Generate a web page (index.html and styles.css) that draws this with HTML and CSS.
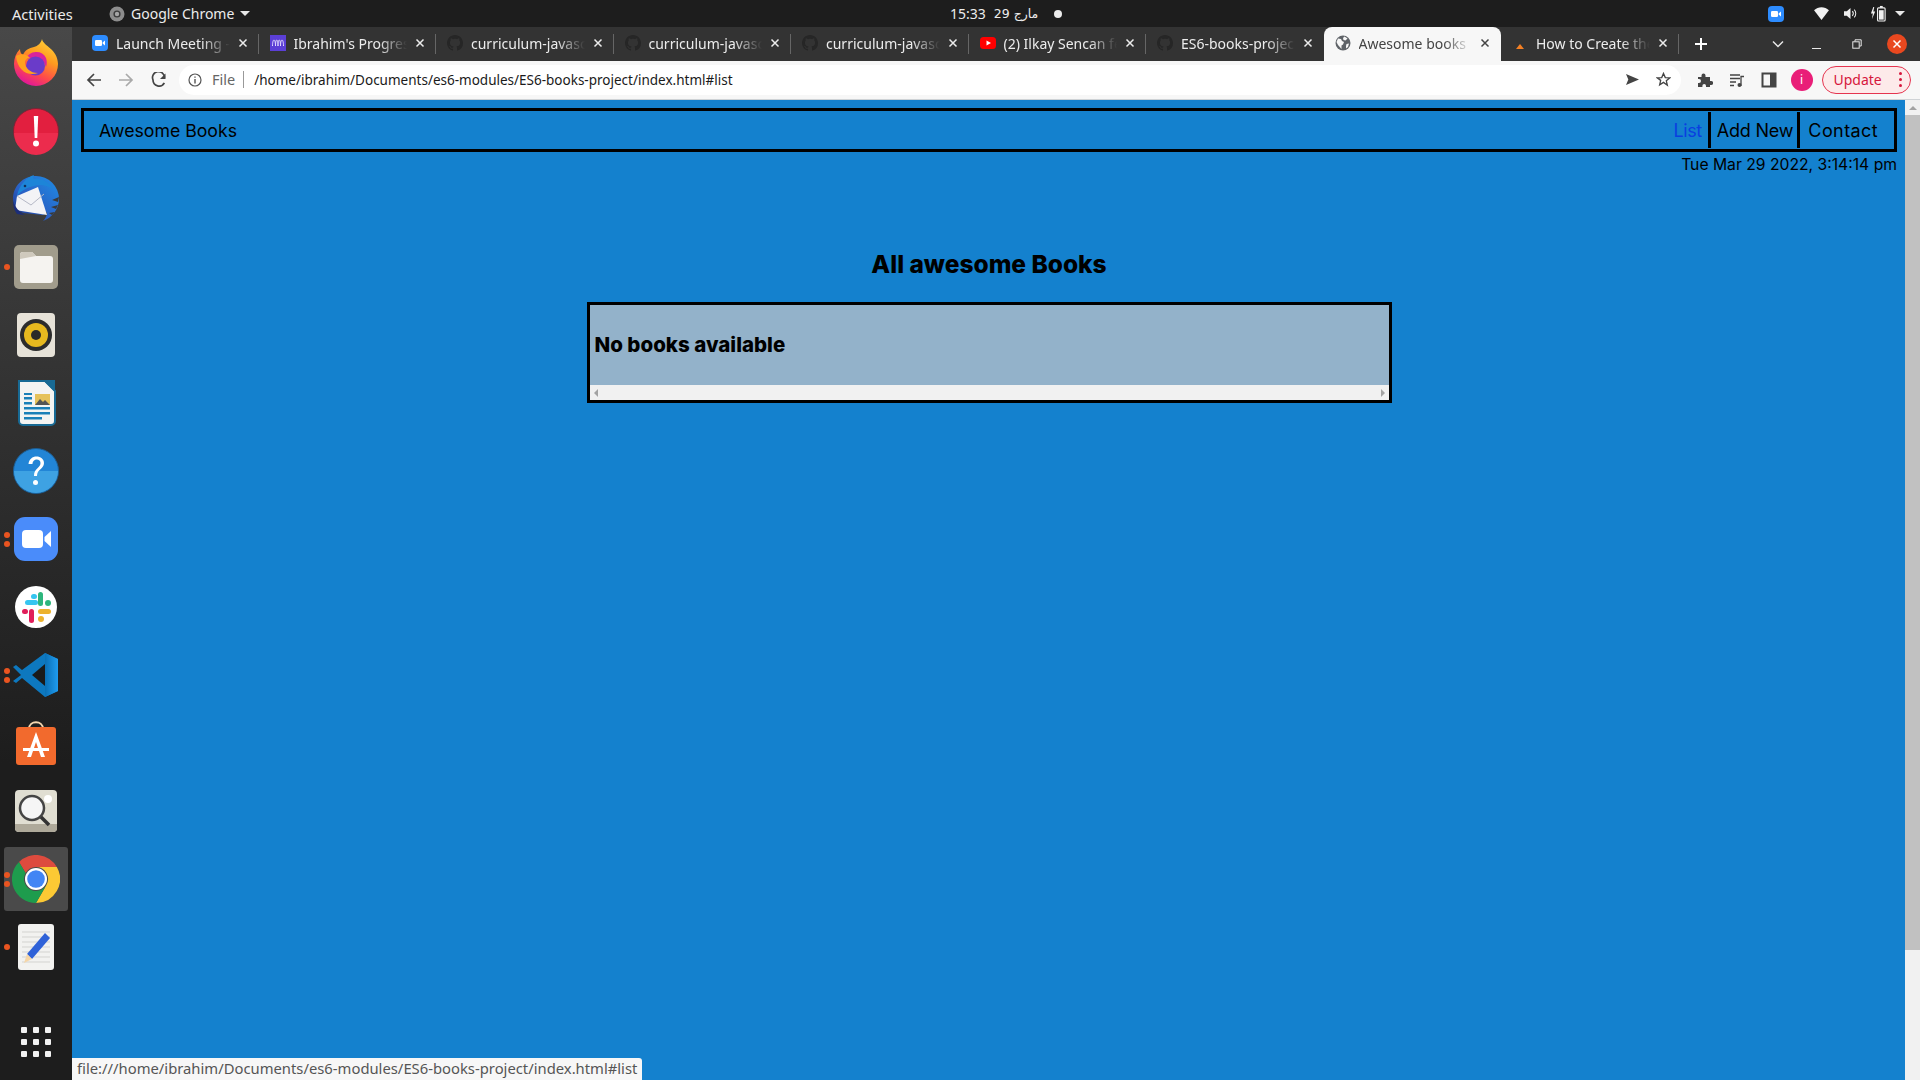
FILE: index.html
```html
<!DOCTYPE html>
<html lang="en">
<head>
    <meta charset="UTF-8">
    <meta name="viewport" content="width=device-width, initial-scale=1.0">
    <title>Awesome books</title>
    <link rel="stylesheet" href="styles.css">
</head>
<body>
    <svg class="defs" width="0" height="0">
        <defs>
            <symbol id="gh" viewBox="0 0 16 16">
                <path d="M8 0C3.58 0 0 3.58 0 8c0 3.54 2.29 6.53 5.47 7.59.4.07.55-.17.55-.38 0-.19-.01-.82-.01-1.49-2.01.37-2.53-.49-2.69-.94-.09-.23-.48-.94-.82-1.13-.28-.15-.68-.52-.01-.53.63-.01 1.08.58 1.23.82.72 1.21 1.87.87 2.33.66.07-.52.28-.87.51-1.07-1.78-.2-3.64-.89-3.64-3.95 0-.87.31-1.59.82-2.15-.08-.2-.36-1.02.08-2.12 0 0 .67-.21 2.2.82.64-.18 1.32-.27 2-.27.68 0 1.36.09 2 .27 1.53-1.04 2.2-.82 2.2-.82.44 1.1.16 1.92.08 2.12.51.56.82 1.27.82 2.15 0 3.07-1.87 3.75-3.65 3.95.29.25.54.73.54 1.48 0 1.07-.01 1.93-.01 2.2 0 .21.15.46.55.38A8.013 8.013 0 0016 8c0-4.42-3.58-8-8-8z"/>
            </symbol>
            <symbol id="tabx" viewBox="0 0 10 10">
                <path d="M1.5 1.5l7 7M8.5 1.5l-7 7" fill="none" stroke="currentColor" stroke-width="1.5"/>
            </symbol>
            <linearGradient id="ffbody" x1=".85" y1="0" x2=".35" y2="1">
                <stop offset="0" stop-color="#ffd83a"/>
                <stop offset=".4" stop-color="#ff9a1f"/>
                <stop offset=".72" stop-color="#ff4a4a"/>
                <stop offset="1" stop-color="#e0169a"/>
            </linearGradient>
            <linearGradient id="tbird" x1="1" y1="0" x2="0" y2="1">
                <stop offset="0" stop-color="#1f8fe6"/>
                <stop offset=".6" stop-color="#2a5fc4"/>
                <stop offset="1" stop-color="#1b2d7a"/>
            </linearGradient>
            <linearGradient id="vsc" x1="0" y1="0" x2="1" y2="0">
                <stop offset="0" stop-color="#0a6fb5"/>
                <stop offset="1" stop-color="#1f9cf0"/>
            </linearGradient>
        </defs>
    </svg>

    <header class="topbar">
        <span class="activities">Activities</span>
        <span class="app-menu">
            <svg class="app-icon" viewBox="0 0 16 16"><circle cx="8" cy="8" r="7.5" fill="#8d8d8d"/><circle cx="8" cy="8" r="3.6" fill="#3a3a3a"/><circle cx="8" cy="8" r="2.2" fill="#a5a5a5"/></svg>
            Google Chrome
            <i class="caret"></i>
        </span>
        <span class="clock">15:33 <span class="clock-date" dir="rtl">مارج 29</span><i class="clock-dot"></i></span>
        <span class="tray">
            <svg class="tray-zoom" viewBox="0 0 16 16"><rect width="16" height="16" rx="4" fill="#2d8cff"/><rect x="3" y="5" width="7" height="6" rx="1.3" fill="#fff"/><path d="M10.6 7.4L13 5.6v4.8l-2.4-1.8z" fill="#fff"/></svg>
            <svg class="tray-wifi" viewBox="0 0 16 14"><path d="M0 3.5C4.500-.9 11.500-.9 16 3.500L8 14z" fill="#f2f2f2"/></svg>
            <svg class="tray-sound" viewBox="0 0 16 14"><path d="M1 4.500h3L8 1v12L4 9.500H1z" fill="#ededed"/><path d="M10 4.500c1.200 1.400 1.200 3.600 0 5M12 2.800c2.200 2.300 2.200 6.100 0 8.400" fill="none" stroke="#ededed" stroke-width="1.100"/></svg>
            <svg class="tray-battery" viewBox="0 0 18 18"><path d="M3.500 2L1 9h2l-1 6 3.500-8h-2l1-5z" fill="#f0f0f0"/><rect x="8" y="3" width="8" height="14" rx="1" fill="none" stroke="#f0f0f0" stroke-width="1.200"/><rect x="10.500" y="1" width="3" height="2" fill="#f0f0f0"/><rect x="9.500" y="5.500" width="5" height="10" fill="#f0f0f0"/></svg>
            <i class="caret"></i>
        </span>
    </header>

    <div class="desktop">
        <nav class="dock">
            <div class="dock-item">
                <svg viewBox="0 0 48 48"><path d="M30 0C31 7 46 10 46 25A22 22 0 012 25C2 19 4 14 8 10C8 13 9 15 11 16C13 11 17 9 22 8C26 7 29 4 30 0z" fill="url(#ffbody)"/><path d="M14 20a11 11 0 0120-1c1 3 1 6 0 9-2-6-6-9-11-9-3 0-6 0-9 1z" fill="#d9249c"/><circle cx="23.500" cy="27" r="9.500" fill="#6a3bc9"/><path d="M4 17c5-3 11-2 14 2-3 0-5 2-5 4 0 6 5 11 13 11-10 4-21-3-22-17z" fill="#ffa11f"/></svg>
            </div>
            <div class="dock-item">
                <svg viewBox="0 0 48 48"><circle cx="24" cy="24" r="22.500" fill="#e21f3f" stroke="#7c2436"/><path d="M2 26h44a22 22 0 01-44 0z" fill="#ec2c4d"/><path d="M21.800 9h4.400l-.9 22h-2.600z" fill="#fff"/><circle cx="24" cy="36.500" r="3" fill="#fff"/></svg>
            </div>
            <div class="dock-item">
                <svg viewBox="0 0 48 48"><path d="M24 1a23 23 0 0123 23c0 10-7 19-16 22 3-3 4-6 4-9l-4 3-20-2C5 36 1 30 1 24 1 11 11 1 24 1z" fill="url(#tbird)"/><path d="M5 21C7 10 15 2 22 0c-1 2-1 3 0 4 7-1 15 3 19 10-7-4-13-5-19-3C16 12 10 15 5 21z" fill="#1d85d8"/><circle cx="13" cy="11" r="1.300" fill="#12305f"/><path d="M5 21l21-9 9 28-32-5z" fill="#f3f3f6"/><path d="M5 21l14 9 13-11" fill="none" stroke="#b5b8c6"/><path d="M1 26c2 6 6 11 12 14l-8-1c-3-4-4-8-4-13z" fill="#1b2d7a"/><path d="M47 22l-7 3 6 2zM46 30l-7 2 5 2zM43 37l-6 1 3 2z" fill="#3a3a3a"/></svg>
            </div>
            <div class="dock-item has-dot">
                <i class="run-dots"><b></b></i>
                <svg viewBox="0 0 48 48"><rect x="2" y="2" width="44" height="44" rx="5" fill="#a19c8c"/><path d="M8 12a3 3 0 013-3h9l4 4h14a3 3 0 013 3v21a3 3 0 01-3 3H11a3 3 0 01-3-3z" fill="#f5f3f0"/><path d="M8 16V12a3 3 0 013-3h9l4 4z" fill="#cfc9bd"/></svg>
            </div>
            <div class="dock-item">
                <svg viewBox="0 0 48 48"><rect x="5" y="2" width="38" height="44" rx="4" fill="#e6e2d8"/><circle cx="24" cy="24" r="16" fill="#2c2c2c"/><circle cx="24" cy="24" r="12" fill="#e7b91f"/><circle cx="24" cy="24" r="5" fill="#2b2a28"/></svg>
            </div>
            <div class="dock-item">
                <svg viewBox="0 0 48 48"><path d="M7 2h26l10 10v30a4 4 0 01-4 4H11a4 4 0 01-4-4z" fill="#f4f4f2" stroke="#186a94" stroke-width="2"/><path d="M31 1l12 12V1z" fill="#186a94"/><path d="M12 18h8v2.500h-8zM12 23h8v2.500h-8zM12 28h26v2.500H12zM12 33h26v2.500H12zM12 38h18v2.500H12z" fill="#1b80b8"/><path d="M12 14h8v2h-8z" fill="#1b80b8"/><rect x="23" y="15" width="15" height="11" fill="#e6c25a"/><path d="M23 26l5-6 3 3 2-2 5 5z" fill="#555"/></svg>
            </div>
            <div class="dock-item">
                <svg viewBox="0 0 48 48"><circle cx="24" cy="24" r="22.500" fill="#2285d6" stroke="#1d5d92"/><path d="M2 24h44a22 22 0 01-44 0z" fill="#3ea2e3"/><path d="M16.500 17c.5-5 4-7.500 8-7.500s7.500 2.600 7.500 6.500c0 6-7 6-7 13h-3c0-8 6.500-8 6.500-13 0-2-1.600-3.500-3.800-3.500-2.300 0-4 1.500-4.300 4.500z" fill="#fff"/><circle cx="23.500" cy="35.500" r="2.500" fill="#fff"/></svg>
            </div>
            <div class="dock-item has-dot">
                <i class="run-dots"><b></b><b></b></i>
                <svg viewBox="0 0 48 48"><rect x="2" y="2" width="44" height="44" rx="11" fill="#4a8cfa"/><rect x="10" y="15" width="21" height="18" rx="4" fill="#fff"/><path d="M32.500 22l6.500-6v16l-6.500-6z" fill="#fff"/></svg>
            </div>
            <div class="dock-item">
                <svg viewBox="0 0 48 48"><circle cx="24" cy="24" r="21" fill="#fff"/><rect x="26" y="9" width="5" height="14" rx="2.500" fill="#2eb67d"/><rect x="13" y="17" width="13" height="5" rx="2.500" fill="#36c5f0"/><rect x="19" y="11" width="6" height="5" rx="2.500" fill="#36c5f0"/><circle cx="36" cy="20" r="3" fill="#2eb67d"/><rect x="10" y="26" width="6" height="5" rx="2.500" fill="#e01e5a"/><rect x="17" y="26" width="5" height="14" rx="2.500" fill="#e01e5a"/><rect x="26" y="26" width="13" height="5" rx="2.500" fill="#ecb22e"/><rect x="26" y="33" width="6" height="6" rx="3" fill="#ecb22e"/></svg>
            </div>
            <div class="dock-item has-dot">
                <i class="run-dots"><b></b><b></b></i>
                <svg viewBox="0 0 48 48"><path d="M33 2l13 6v32l-13 6L10 27l-6 5-3-2 8-6-8-8 3-2 6 5z" fill="#0d78bf"/><path d="M33 2l13 6v32l-13 6z" fill="url(#vsc)"/><path d="M33 13L20 24l13 11z" fill="#1a1a1a"/></svg>
            </div>
            <div class="dock-item">
                <svg viewBox="0 0 48 48"><path d="M17 10c0-9 14-9 14 0" fill="none" stroke="#f5d7b0" stroke-width="2"/><rect x="4" y="8" width="40" height="38" rx="3" fill="#f26a2d"/><path d="M24 13l-9 25h4l5-15 5 15h4z" fill="#fff"/><rect x="11" y="29" width="26" height="3" fill="#fff"/></svg>
            </div>
            <div class="dock-item">
                <svg viewBox="0 0 48 48"><rect x="3" y="3" width="42" height="42" rx="4" fill="#e0ded2"/><path d="M3 37h42v4a4 4 0 01-4 4H7a4 4 0 01-4-4z" fill="#aea99a"/><circle cx="20" cy="21" r="12" fill="#f5f5f5" stroke="#444" stroke-width="2.500"/><path d="M29 30l8 8" stroke="#333" stroke-width="3.500"/><circle cx="36" cy="12" r="4" fill="#fff"/></svg>
            </div>
            <div class="dock-item is-active has-dot">
                <i class="run-dots"><b></b><b></b></i>
                <svg viewBox="0 0 48 48"><path d="M7 7A24 24 0 0144.800 12H24a12 12 0 00-10.400 6z" fill="#dd4b3e"/><path d="M44.800 12A24 24 0 0124 48l10.400-18A12 12 0 0024 12z" fill="#fcc934"/><path d="M24 48A24 24 0 017 7l6.600 11a12 12 0 0020.800 12z" fill="#1e9c4d"/><circle cx="24" cy="24" r="11" fill="#fff"/><circle cx="24" cy="24" r="8.800" fill="#4285f4"/></svg>
            </div>
            <div class="dock-item has-dot">
                <i class="run-dots"><b></b></i>
                <svg viewBox="0 0 48 48"><rect x="6" y="1" width="36" height="46" rx="3" fill="#f2f2f0"/><path d="M10 9h28M10 14h28M10 19h28M10 24h28M10 29h28M10 34h28M10 39h28" stroke="#d3d3d0"/><path d="M33 10l5 5-18 21-5-5z" fill="#2f62d8"/><path d="M15 31l5 5-8 4z" fill="#f5d6a8"/></svg>
            </div>
            <div class="dock-grid">
                <i></i><i></i><i></i><i></i><i></i><i></i><i></i><i></i><i></i>
            </div>
        </nav>

        <div class="browser">
            <div class="tabstrip">
                <div class="tab">
                    <svg class="favicon" viewBox="0 0 16 16"><rect width="16" height="16" rx="4" fill="#2d8cff"/><rect x="3" y="5" width="7" height="6" rx="1.300" fill="#fff"/><path d="M10.600 7.400L13 5.600v4.800l-2.400-1.800z" fill="#fff"/></svg>
                    <span class="tab-title">Launch Meeting - Zoom</span>
                    <svg class="tab-close"><use href="#tabx"/></svg>
                </div>
                <div class="tab">
                    <svg class="favicon" viewBox="0 0 16 16"><rect width="16" height="16" fill="#5b3fd6"/><path d="M2.500 11c0-8 3-8 3 0M5.500 11c0-8 2.500-8 2.500 0M8 11c0-8 2.500-8 2.500 0M10.500 11c0-8 3-8 3 0" fill="none" stroke="#e4dcff" stroke-width="1"/></svg>
                    <span class="tab-title">Ibrahim's Progress</span>
                    <svg class="tab-close"><use href="#tabx"/></svg>
                </div>
                <div class="tab">
                    <svg class="favicon gh-icon"><use href="#gh"/></svg>
                    <span class="tab-title">curriculum-javascript</span>
                    <svg class="tab-close"><use href="#tabx"/></svg>
                </div>
                <div class="tab">
                    <svg class="favicon gh-icon"><use href="#gh"/></svg>
                    <span class="tab-title">curriculum-javascript</span>
                    <svg class="tab-close"><use href="#tabx"/></svg>
                </div>
                <div class="tab">
                    <svg class="favicon gh-icon"><use href="#gh"/></svg>
                    <span class="tab-title">curriculum-javascript</span>
                    <svg class="tab-close"><use href="#tabx"/></svg>
                </div>
                <div class="tab">
                    <svg class="favicon" viewBox="0 0 16 16"><rect y="2" width="16" height="12" rx="3.500" fill="#f00"/><path d="M6.500 5.500L11 8l-4.500 2.500z" fill="#fff"/></svg>
                    <span class="tab-title">(2) Ilkay Sencan feat</span>
                    <svg class="tab-close"><use href="#tabx"/></svg>
                </div>
                <div class="tab tab-before-active">
                    <svg class="favicon gh-icon"><use href="#gh"/></svg>
                    <span class="tab-title">ES6-books-project</span>
                    <svg class="tab-close"><use href="#tabx"/></svg>
                </div>
                <div class="tab tab-active">
                    <svg class="favicon" viewBox="0 0 16 16"><circle cx="8" cy="8" r="7.500" fill="#5f6368"/><path d="M3 3.500l3 .5 1 2 2 1-1 2.500-1.500 1V14L3 10 1.500 7zM9.500 1.500l3 2-2 2-2-.5-.5-2zM11.500 9l2.500-.5-1 3.500-2 1.500V11z" fill="#f7f7f7"/></svg>
                    <span class="tab-title">Awesome books</span>
                    <svg class="tab-close"><use href="#tabx"/></svg>
                </div>
                <div class="tab">
                    <svg class="favicon" viewBox="0 0 16 16"><path d="M4 14l4-5 4 5z" fill="#f48024"/></svg>
                    <span class="tab-title">How to Create the Header</span>
                    <svg class="tab-close"><use href="#tabx"/></svg>
                </div>
                <svg class="new-tab" viewBox="0 0 14 14"><path d="M7 1v12M1 7h12" stroke="#fff" stroke-width="2"/></svg>
                <div class="window-controls">
                    <svg class="tab-search" viewBox="0 0 12 8"><path d="M1 1.500l5 5 5-5" fill="none" stroke="#e8e8e8" stroke-width="1.500"/></svg>
                    <i class="win-min"></i>
                    <svg class="win-restore" viewBox="0 0 10 10"><path d="M3 2.500V.8h6.200V7H7.500" fill="none" stroke="#e8e8e8"/><rect x=".8" y="2.800" width="6.400" height="6.400" fill="none" stroke="#e8e8e8"/></svg>
                    <svg class="win-close" viewBox="0 0 20 20"><circle cx="10" cy="10" r="10" fill="#e9481f"/><path d="M6.500 6.500l7 7M13.500 6.500l-7 7" stroke="#fff" stroke-width="1.500"/></svg>
                </div>
            </div>

            <div class="toolbar">
                <svg class="tool-btn" viewBox="0 0 16 16"><path d="M15 8H2.500M8 2L2 8l6 6" fill="none" stroke="#444" stroke-width="1.700"/></svg>
                <svg class="tool-btn" viewBox="0 0 16 16"><path d="M1 8h12.500M8 2l6 6-6 6" fill="none" stroke="#a9a9a9" stroke-width="1.700"/></svg>
                <svg class="tool-btn" viewBox="0 0 16 16"><path d="M13.500 5.500A6 6 0 102 8a6 6 0 0011.300 2.800" fill="none" stroke="#444" stroke-width="1.700"/><path d="M14.500 1.500v5.500H9z" fill="#444"/></svg>
                <div class="omnibox">
                    <svg class="info-icon" viewBox="0 0 14 14"><circle cx="7" cy="7" r="6" fill="none" stroke="#555" stroke-width="1.200"/><path d="M7 6v4.500M7 3.500v1.300" stroke="#555" stroke-width="1.400"/></svg>
                    <span class="scheme">File</span>
                    <span class="url">/home/ibrahim/Documents/es6-modules/ES6-books-project/index.html#list</span>
                    <svg class="omni-send" viewBox="0 0 16 14"><path d="M1 1l14 6-14 6 2.500-6z" fill="#444"/></svg>
                    <svg class="omni-star" viewBox="0 0 16 16"><path d="M8 1.500l1.900 4.400 4.700.4-3.600 3.100 1.100 4.700L8 11.100l-4.100 2.500L5 8.900 1.400 6.300l4.700-.4z" fill="none" stroke="#444" stroke-width="1.400"/></svg>
                </div>
                <div class="toolbar-actions">
                    <svg class="tool-action" viewBox="0 0 16 16"><path d="M1 5h3.500V3.500a2 2 0 014 0V5H13v4h1.200a2 2 0 010 4H13v2H9v-1.200a1.800 1.800 0 00-3.600 0V15H1v-4h1a2 2 0 000-4H1z" fill="#444"/></svg>
                    <svg class="tool-action" viewBox="0 0 16 16"><path d="M1 3h10M1 6.500h10M1 10h6M1 13.500h4" stroke="#444" stroke-width="1.300"/><path d="M12 14V4.500h3" fill="none" stroke="#444" stroke-width="1.300"/><circle cx="10.500" cy="13" r="2" fill="#444"/></svg>
                    <svg class="tool-action" viewBox="0 0 16 16"><rect x="1.500" y="1.500" width="13" height="13" fill="none" stroke="#444" stroke-width="2"/><rect x="9" y="2" width="5" height="12" fill="#444"/></svg>
                    <span class="avatar">i</span>
                    <span class="update-btn">Update <i class="kebab"><b></b><b></b><b></b></i></span>
                </div>
            </div>

            <div class="viewport">
                <main class="page">
                    <div class="navbar">
                        <span class="brand">Awesome Books</span>
                        <ul class="nav-links">
                            <li class="nav-link nav-link-current">List</li>
                            <li class="nav-link nav-link-add">Add New</li>
                            <li class="nav-link nav-link-contact">Contact</li>
                        </ul>
                    </div>
                    <p class="date">Tue Mar 29 2022, 3:14:14 pm</p>
                    <h2 class="heading">All awesome Books</h2>
                    <section class="book-list">
                        <div class="book-list-body">No books available</div>
                        <div class="h-scroll">
                            <i class="arrow-left"></i>
                            <i class="arrow-right"></i>
                        </div>
                    </section>
                </main>
                <div class="v-scroll">
                    <i class="arrow-up"></i>
                    <div class="v-thumb"></div>
                </div>
                <div class="status-bubble">file:///home/ibrahim/Documents/es6-modules/ES6-books-project/index.html#list</div>
            </div>
        </div>
    </div>
</body>
</html>
```

FILE: styles.css
```css
* {
    box-sizing: border-box;
}
html, body {
    margin: 0;
    height: 100%;
}
body {
    width: 1920px;
    height: 1080px;
    overflow: hidden;
    display: flex;
    flex-direction: column;
    font-family: "Noto Sans", sans-serif;
    background-color: #1d1d1d;
}
.defs {
    position: absolute;
}

/* ubuntu top bar */
.topbar {
    height: 27px;
    flex: none;
    position: relative;
    display: flex;
    align-items: center;
    padding-left: 12px;
    background-color: #1d1d1d;
    color: #ececec;
    font-size: 14px;
}
.activities {
    width: 97px;
    font-size: 14.6px;
}
.app-menu {
    display: flex;
    align-items: center;
    gap: 6px;
}
.app-icon {
    width: 16px;
    height: 16px;
}
.caret {
    display: inline-block;
    width: 0;
    height: 0;
    border-left: 5px solid transparent;
    border-right: 5px solid transparent;
    border-top: 5px solid #e8e8e8;
}
.clock {
    position: absolute;
    left: 950px;
    top: 4px;
    display: flex;
    align-items: center;
    gap: 8px;
    white-space: nowrap;
}
.clock-date {
    font-family: "DejaVu Sans", sans-serif;
    font-size: 12.5px;
}
.clock-dot {
    width: 8px;
    height: 8px;
    margin-left: 8px;
    border-radius: 50%;
    background-color: #ececec;
}
.tray {
    margin-left: auto;
    display: flex;
    align-items: center;
    padding-right: 15px;
}
.tray-zoom {
    width: 16px;
    height: 16px;
}
.tray-wifi {
    width: 15px;
    height: 13px;
    margin-left: 30px;
}
.tray-sound {
    width: 15px;
    height: 13px;
    margin-left: 14px;
}
.tray-battery {
    width: 17px;
    height: 17px;
    margin-left: 12px;
}
.tray .caret {
    margin-left: 8px;
}

.desktop {
    flex: 1;
    display: flex;
    min-height: 0;
}

/* launcher */
.dock {
    width: 72px;
    flex: none;
    display: flex;
    flex-direction: column;
    padding-top: 2px;
    background: linear-gradient(#484848 0, #2f2f2f 40%, #1d1d1d 70%);
}
.dock-item {
    position: relative;
    height: 68px;
    flex: none;
    display: flex;
    align-items: center;
    justify-content: center;
}
.dock-item svg {
    width: 48px;
    height: 48px;
}
.is-active::before {
    content: "";
    position: absolute;
    left: 4px;
    right: 4px;
    top: 2px;
    bottom: 2px;
    border-radius: 3px;
    background-color: #4a4a4a;
}
.is-active svg {
    position: relative;
}
.run-dots {
    position: absolute;
    left: 4px;
    top: 0;
    bottom: 0;
    display: flex;
    flex-direction: column;
    justify-content: center;
    gap: 3px;
    z-index: 1;
}
.run-dots b {
    width: 6px;
    height: 6px;
    border-radius: 50%;
    background-color: #e95420;
}
.dock-grid {
    margin-top: auto;
    margin-bottom: 23px;
    align-self: center;
    display: grid;
    grid-template-columns: repeat(3, 6px);
    grid-template-rows: repeat(3, 6px);
    gap: 6px;
    column-gap: 6px;
}
.dock-grid i {
    border-radius: 1px;
    background-color: #f2f2f2;
}

.browser {
    flex: 1;
    min-width: 0;
    display: flex;
    flex-direction: column;
}

/* tabs */
.tabstrip {
    height: 34px;
    flex: none;
    display: flex;
    align-items: center;
    padding-left: 9px;
    background-color: #333333;
}
.tab {
    position: relative;
    width: 177.5px;
    height: 34px;
    flex: none;
    display: flex;
    align-items: center;
    padding: 0 11px 2px 11px;
    color: #ececec;
    font-size: 14px;
}
.tab::after {
    content: "";
    position: absolute;
    right: 0;
    top: 7px;
    bottom: 7px;
    width: 1px;
    background-color: #666666;
}
.tab-before-active::after, .tab-active::after {
    display: none;
}
.tab-active {
    border-radius: 8px 8px 0 0;
    background-color: #f7f7f7;
    color: #444444;
}
.favicon {
    width: 16px;
    height: 16px;
    flex: none;
}
.gh-icon {
    fill: #262626;
}
.tab-title {
    flex: 1;
    min-width: 0;
    margin-left: 8px;
    white-space: nowrap;
    overflow: hidden;
    -webkit-mask-image: linear-gradient(to right, #000 75%, transparent 100%);
    mask-image: linear-gradient(to right, #000 75%, transparent 100%);
}
.tab-close {
    width: 10px;
    height: 10px;
    flex: none;
    margin-left: 8px;
}
.new-tab {
    width: 14px;
    height: 14px;
    margin-left: 15px;
}
.window-controls {
    margin-left: auto;
    display: flex;
    align-items: center;
    padding-right: 13px;
}
.tab-search {
    width: 12px;
    height: 8px;
}
.win-min {
    width: 9px;
    height: 1px;
    margin: 8px 0 0 28px;
    background-color: #e8e8e8;
}
.win-restore {
    width: 10px;
    height: 10px;
    margin-left: 31px;
}
.win-close {
    width: 20px;
    height: 20px;
    margin-left: 25px;
}

/* toolbar */
.toolbar {
    height: 39px;
    flex: none;
    display: flex;
    align-items: center;
    padding: 0 9px 1px 13.5px;
    border-bottom: 1px solid #cfd3d6;
    background-color: #f7f7f7;
}
.tool-btn {
    width: 16px;
    height: 16px;
    flex: none;
    margin-right: 16.5px;
}
.omnibox {
    width: 1502px;
    height: 30px;
    flex: none;
    display: flex;
    align-items: center;
    margin-left: -4px;
    padding: 0 9px;
    border-radius: 15px;
    background-color: #ffffff;
}
.info-icon {
    width: 14px;
    height: 14px;
    flex: none;
}
.scheme {
    padding: 0 8px 0 10px;
    margin-right: 10px;
    border-right: 1px solid #999999;
    color: #666666;
    font-size: 14.5px;
    line-height: 17px;
}
.url {
    flex: 1;
    color: #1a1a1a;
    font-size: 13.5px;
}
.omni-send {
    width: 15px;
    height: 13px;
    margin-right: 16px;
}
.omni-star {
    width: 15px;
    height: 15px;
    margin-right: 1px;
}
.toolbar-actions {
    display: flex;
    align-items: center;
    margin-left: 15.5px;
}
.tool-action {
    width: 16px;
    height: 16px;
    margin-right: 16px;
}
.avatar {
    width: 22px;
    height: 22px;
    display: flex;
    align-items: center;
    justify-content: center;
    margin-left: -2px;
    border-radius: 50%;
    background-color: #e91e78;
    color: #ffffff;
    font-size: 12px;
}
.update-btn {
    width: 89px;
    height: 28px;
    display: flex;
    align-items: center;
    justify-content: space-between;
    margin-left: 9px;
    padding: 0 8px 0 11px;
    border: 1px solid #e5344f;
    border-radius: 14px;
    background-color: #fdeaea;
    color: #d6163c;
    font-size: 14px;
}
.kebab {
    display: flex;
    flex-direction: column;
    gap: 3px;
}
.kebab b {
    width: 3px;
    height: 3px;
    border-radius: 50%;
    background-color: #d6163c;
}

/* the page itself */
.viewport {
    position: relative;
    flex: 1;
    min-height: 0;
    display: flex;
}
.page {
    flex: 1;
    min-width: 0;
    padding: 8px 8px 0 9px;
    background-color: #1481ce;
    color: #000000;
    font-family: Inter, sans-serif;
}
.navbar {
    height: 44px;
    display: flex;
    align-items: center;
    justify-content: space-between;
    padding: 0 16px 0 15px;
    border: 3px solid #000000;
    font-size: 18px;
}
.brand {
    font-size: 17.7px;
}
.nav-links {
    display: flex;
    margin: 0;
    padding: 0;
    list-style: none;
}
.nav-link {
    height: 36px;
    display: flex;
    align-items: center;
    padding: 0 6px 0 8px;
    border-right: 3px solid #000000;
}
.nav-link-current {
    color: #0a3fe0;
    letter-spacing: -0.4px;
}
.nav-link-add {
    padding: 0 4px 0 6px;
    letter-spacing: -0.2px;
}
.nav-link-contact {
    padding-right: 0;
    border-right: none;
    letter-spacing: 0.4px;
}
.date {
    height: 24px;
    margin: 0;
    font-size: 15.7px;
    line-height: 26px;
    text-align: right;
}
.heading {
    margin: 70px 0 20px;
    font-size: 24.5px;
    font-weight: 800;
    line-height: 36px;
    text-align: center;
}
.book-list {
    width: 805px;
    margin: 0 auto;
    border: 3px solid #000000;
}
.book-list-body {
    height: 80px;
    display: flex;
    align-items: center;
    padding: 0 0 1px 5px;
    background-color: #93b2ca;
    font-size: 20.5px;
    font-weight: 800;
}
.h-scroll {
    height: 15px;
    display: flex;
    align-items: center;
    justify-content: space-between;
    padding: 0 4px;
    background-color: #f1f1f1;
}
.arrow-left {
    border-top: 4px solid transparent;
    border-bottom: 4px solid transparent;
    border-right: 4px solid #a3a3a3;
}
.arrow-right {
    border-top: 4px solid transparent;
    border-bottom: 4px solid transparent;
    border-left: 4px solid #a3a3a3;
}
.v-scroll {
    width: 15px;
    flex: none;
    display: flex;
    flex-direction: column;
    align-items: center;
    background-color: #f1f1f1;
}
.arrow-up {
    margin-top: 6px;
    border-left: 4px solid transparent;
    border-right: 4px solid transparent;
    border-bottom: 4px solid #a3a3a3;
}
.v-thumb {
    width: 100%;
    height: 835px;
    margin-top: 5px;
    background-color: #c1c1c1;
}
.status-bubble {
    position: absolute;
    left: 0;
    bottom: 0;
    height: 22px;
    padding: 0 5px;
    border-radius: 0 3px 0 0;
    background-color: #f7f7f7;
    color: #555555;
    font-family: "Noto Sans", sans-serif;
    font-size: 14.8px;
    line-height: 21px;
    white-space: nowrap;
}
```
